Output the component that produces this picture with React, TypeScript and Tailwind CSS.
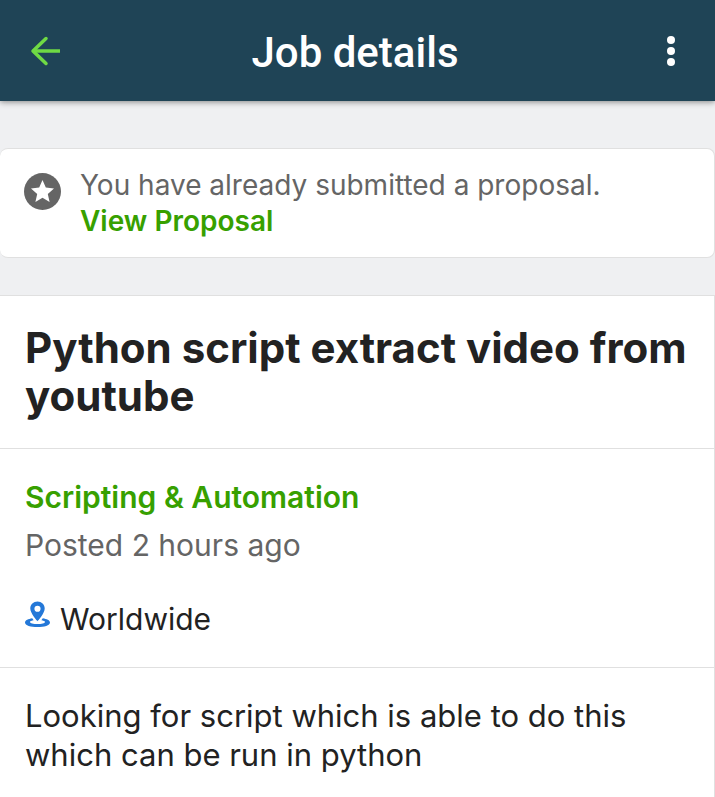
function BackArrow() {
  return (
    <svg className="h-8 w-8" viewBox="0 0 32 32" fill="none" stroke="#6fda44" strokeWidth="3.5" strokeLinecap="round" strokeLinejoin="round" aria-hidden="true">
      <path d="M17 3.500 4 16l13 12.500" />
      <path d="M5 16h26" strokeLinecap="butt" />
    </svg>
  );
}

function MoreDots() {
  return (
    <svg className="h-8 w-6" viewBox="4 0 24 32" fill="#ffffff" aria-hidden="true">
      <circle cx="16" cy="5" r="4" />
      <circle cx="16" cy="16" r="4" />
      <circle cx="16" cy="27" r="4" />
    </svg>
  );
}

function StarBadge() {
  return (
    <svg className="mt-1.5 h-[37px] w-[37px] shrink-0" viewBox="0 0 37 37" aria-hidden="true">
      <circle cx="18.5" cy="18.5" r="18.5" fill="#656565" />
      <path d="m18.500 7 3.300 7.600 8.200.8-6.200 5.500 1.800 8.200-7.100-4.300-7.100 4.300 1.800-8.200-6.200-5.500 8.200-.8Z" fill="#ffffff" />
    </svg>
  );
}

function LocationPin() {
  return (
    <svg className="h-[27px] w-[25px] shrink-0" viewBox="0 0 26 27" fill="#2478d8" aria-hidden="true">
      <path fillRule="evenodd" d="M13 0C8.800 0 5.500 3.200 5.500 7.300 5.500 12.500 13 20.500 13 20.500s7.500-8 7.500-13.200C20.500 3.200 17.200 0 13 0Zm0 4.300a3.200 3.200 0 1 1 0 6.400 3.200 3.200 0 0 1 0-6.400Z" />
      <path d="M7.500 17.500C3.500 18.200 0 19.700 0 21.800 0 24.900 6 26.500 13 26.500s13-1.600 13-4.700c0-2.100-3.500-3.600-7.500-4.300L17 19.600c2 .3 3.800.9 3.800 1.700 0 1.300-3.500 2.100-7.800 2.100s-7.800-.8-7.800-2.100c0-.8 1.800-1.400 3.800-1.700Z" />
    </svg>
  );
}

export default function App() {
  return (
    <div className="flex min-h-screen flex-col bg-[#eff0f2] font-['Inter','Liberation_Sans',sans-serif] text-[#222222]">
      <header className="flex h-[101px] items-center justify-between bg-[#1f4456] pr-[22px] pl-[29px] shadow-[0_1px_6px_rgba(0,0,0,0.45)]">
        <button type="button" aria-label="Back"><BackArrow /></button>
        <h1 className="pt-1 font-['Roboto',sans-serif] text-[42px] leading-12 font-medium text-white">Job details</h1>
        <button type="button" aria-label="More options" className="flex w-11 justify-center"><MoreDots /></button>
      </header>

      <main className="flex grow flex-col">
        <section className="mt-[47px] flex gap-[19px] rounded-lg border border-l-0 border-[#e0e0e0] bg-white px-6 pt-[18px] pb-[18px]">
          <StarBadge />
          <div className="text-[28px] leading-9">
            <p className="text-[#656565]">You have already submitted a proposal.</p>
            <a href="#proposal" className="font-semibold text-[#37a000]">View Proposal</a>
          </div>
        </section>

        <article className="mt-[37px] grow border-t border-r border-[#e0e0e0] bg-white">
          <h2 className="border-b border-[#e0e0e0] px-[25px] pt-7 pb-7 text-[42px] leading-12 font-bold">
            Python script extract video from youtube
          </h2>
          <section className="border-b border-[#e0e0e0] px-[25px] pt-6 pb-[30px] text-[30px] leading-12">
            <a href="#category" className="block font-semibold text-[#37a000]">Scripting &amp; Automation</a>
            <p className="text-[#656565]">Posted 2 hours ago</p>
            <div className="mt-8 flex gap-2.5 leading-9">
              <LocationPin />
              <span>Worldwide</span>
            </div>
          </section>
          <p className="px-[25px] pt-7 text-[31px] leading-[39px]">
            Looking for script which is able to do this which can be run in python
          </p>
        </article>
      </main>
    </div>
  );
}
